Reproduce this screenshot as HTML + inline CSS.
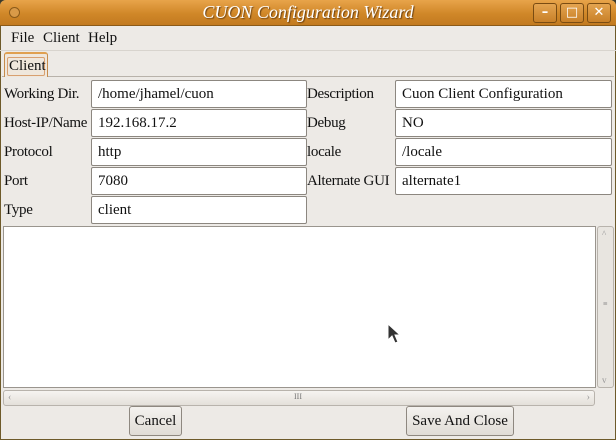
<!DOCTYPE html>
<html><head><meta charset="utf-8"><style>
*{box-sizing:border-box;margin:0;padding:0}
body{width:616px;height:440px;overflow:hidden;background:#3c3a2a;font-family:"Liberation Serif",serif;font-size:15px;color:#111;position:relative}
.win{position:absolute;left:0;top:0;width:616px;height:440px;background:#edeae6;border-radius:6px 6px 0 0;overflow:hidden;box-shadow:inset 0 0 0 1px #6e5a2a}
.title{position:absolute;left:0;top:0;width:616px;height:26px;background:linear-gradient(#e8a44a,#d08728 55%,#c27a20);border-bottom:1px solid #8b5a18}
.title .t{position:absolute;left:0;right:0;top:2px;text-align:center;color:#fff;font-style:italic;font-size:18px;text-shadow:1px 1px 1px #6a4010}
.circ{position:absolute;left:9px;top:7px;width:11px;height:11px;border-radius:50%;border:1px solid #8a5a1a;background:#d99a48}
.wb{position:absolute;top:3px;width:24px;height:20px;border:1px solid #7a4c12;border-radius:3px;background:linear-gradient(#e4a450,#c88028);color:#fff;font-family:"DejaVu Sans",sans-serif;font-weight:bold;text-align:center;font-size:13px;line-height:18px}
.menu{position:absolute;top:26px;left:0;width:616px;height:25px;border-bottom:1px solid #d8d4ce}
.menu span{position:absolute;top:4px;font-size:15px}
.tab{position:absolute;left:4px;top:52px;width:44px;height:25px;border:1px solid #c78c4c;border-top:2px solid #e0a050;border-bottom:none;background:#efe7dc;border-radius:3px 3px 0 0}
.tab div{position:absolute;left:2px;top:3px;width:38px;height:19px;border:1px solid #d8a070;border-radius:2px;font-size:15px;padding-left:1px;line-height:17px}
.pane{position:absolute;left:2px;top:76px;width:612px;height:1px;background:#b8b2aa}
.lbl{position:absolute;font-size:15px;letter-spacing:-0.3px}
.e{position:absolute;height:28px;background:#fff;border:1px solid #8c8780;border-radius:2px;font-size:15px;padding:5px 0 0 6px}
.ta{position:absolute;left:3px;top:226px;width:593px;height:162px;background:#fff;border:1px solid #9a958e}
.vs{position:absolute;left:597px;top:226px;width:17px;height:162px;border:1px solid #b8b3ac;border-radius:3px;background:#e8e5e0}
.hs{position:absolute;left:3px;top:390px;width:592px;height:16px;border:1px solid #b8b3ac;border-radius:3px;background:linear-gradient(#f6f4f1,#e4e0da)}
.btn{position:absolute;top:406px;height:30px;border:1px solid #8e8880;border-radius:3px;background:linear-gradient(#f4f2ef,#e0dcd6);font-size:15px;text-align:center;line-height:28px}
</style></head><body><div class="win">
<div class="title"><div class="circ"></div><div class="t">CUON Configuration Wizard</div>
<div class="wb" style="left:533px">–</div><div class="wb" style="left:560px">□</div><div class="wb" style="left:587px">✕</div></div>
<div class="menu"><span style="left:11px">File</span><span style="left:43px">Client</span><span style="left:88px">Help</span></div>
<div class="pane"></div>
<div class="tab"><div>Client</div></div>
<div class="lbl" style="left:4px;top:86px">Working Dir.</div><div class="e" style="left:91px;top:80px;width:216px">/home/jhamel/cuon</div>
<div class="lbl" style="left:307px;top:86px">Description</div><div class="e" style="left:395px;top:80px;width:217px">Cuon Client Configuration</div>
<div class="lbl" style="left:4px;top:115px;width:87px;overflow:hidden;white-space:nowrap">Host-IP/Name</div><div class="e" style="left:91px;top:109px;width:216px">192.168.17.2</div>
<div class="lbl" style="left:307px;top:115px">Debug</div><div class="e" style="left:395px;top:109px;width:217px">NO</div>
<div class="lbl" style="left:4px;top:144px">Protocol</div><div class="e" style="left:91px;top:138px;width:216px">http</div>
<div class="lbl" style="left:307px;top:144px">locale</div><div class="e" style="left:395px;top:138px;width:217px">/locale</div>
<div class="lbl" style="left:4px;top:173px">Port</div><div class="e" style="left:91px;top:167px;width:216px">7080</div>
<div class="lbl" style="left:307px;top:173px;width:88px;overflow:hidden;white-space:nowrap">Alternate GUI</div><div class="e" style="left:395px;top:167px;width:217px">alternate1</div>
<div class="lbl" style="left:4px;top:202px">Type</div><div class="e" style="left:91px;top:196px;width:216px">client</div>
<div class="ta"></div>
<div class="vs"><div style="position:absolute;top:2px;left:4px;font-size:9px;color:#999">^</div><div style="position:absolute;top:72px;left:5px;font-size:8px;color:#777">≡</div><div style="position:absolute;bottom:2px;left:4px;font-size:9px;color:#999">v</div></div>
<div class="hs"><div style="position:absolute;left:4px;top:1px;font-size:10px;color:#999">‹</div><div style="position:absolute;left:290px;top:1px;font-size:8px;color:#777">III</div><div style="position:absolute;right:4px;top:1px;font-size:10px;color:#999">›</div></div>
<div class="btn" style="left:129px;width:53px">Cancel</div>
<div class="btn" style="left:406px;width:108px">Save And Close</div>
<svg style="position:absolute;left:386px;top:323px" width="16" height="24"><path d="M2 1 L2 17 L6 13 L9 20 L12 19 L9 12 L14 12 Z" fill="#333" stroke="#fff" stroke-width="1"/></svg>
</div></body></html>
